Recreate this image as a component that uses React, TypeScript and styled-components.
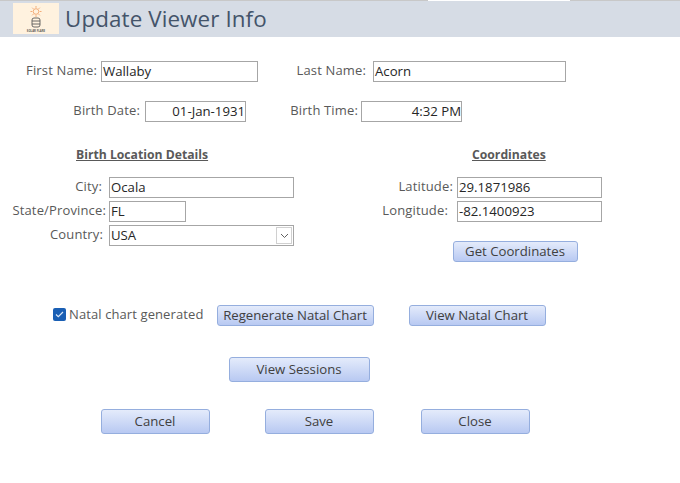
import styled, { createGlobalStyle } from "styled-components";

const GlobalStyle = createGlobalStyle`
  html, body {
    margin: 0;
    padding: 0;
    background: #ffffff;
    font-family: "Open Sans", "Noto Sans", sans-serif;
  }
`;

const Page = styled.div`
  width: 680px;
  height: 483px;
  overflow: hidden;
  background: #fff;
`;

const TopEdge = styled.div`
  display: flex;
  height: 1px;
  background: #c8c8c8;
`;

const TopGap = styled.div`
  width: 142px;
  margin-left: 428px;
  background: #fff;
`;

const Header = styled.header`
  display: flex;
  align-items: center;
  height: 36px;
  padding: 0 0 1px 13px;
  box-sizing: border-box;
  background: #d6dce5;
`;

const Logo = styled.svg`
  width: 46px;
  height: 31px;
  display: block;
`;

const Title = styled.h1`
  margin: 0 0 0 6px;
  font-size: 22.4px;
  font-weight: 400;
  line-height: 31px;
  letter-spacing: 0.1px;
  color: #44546a;
`;

const Body = styled.main`
  display: flex;
  flex-direction: column;
`;

const Row = styled.div<{ $top: number; $left?: number }>`
  display: flex;
  align-items: center;
  margin-top: ${(p) => p.$top}px;
  padding-left: ${(p) => p.$left ?? 0}px;
`;

const Label = styled.label<{ $w: number; $gap?: number }>`
  width: ${(p) => p.$w}px;
  margin-right: ${(p) => p.$gap ?? 4}px;
  margin-bottom: 4px;
  flex: none;
  display: flex;
  justify-content: flex-end;
  white-space: nowrap;
  font-size: 13px;
  line-height: 16px;
  letter-spacing: 0.15px;
  color: #595959;
`;

const Field = styled.div<{ $w: number; $right?: boolean; $ml?: number }>`
  position: relative;
  width: ${(p) => p.$w}px;
  height: 21px;
  margin-left: ${(p) => p.$ml ?? 0}px;
  flex: none;
  box-sizing: border-box;
  border: 1px solid #a6a6a6;
  padding: 0 ${(p) => (p.$right ? 0 : 1)}px 0 1px;
  text-align: ${(p) => (p.$right ? "right" : "left")};
  font-size: 13.2px;
  line-height: 18px;
  color: #262626;
  background: #fff;
  white-space: nowrap;
`;

const ComboArrow = styled.span`
  position: absolute;
  top: 1px;
  right: 1px;
  width: 16px;
  height: 17px;
  display: flex;
  align-items: center;
  justify-content: center;
  box-sizing: border-box;
  border: 1px solid #d0d0d0;
  background: #fff;
`;

const Columns = styled.div`
  display: flex;
  margin-top: 24px;
`;

const LocationColumn = styled.section`
  width: 381px;
  flex: none;
`;

const CoordinatesColumn = styled.section`
  flex: 1;
`;

const Heading = styled.h2<{ $left: number }>`
  margin: 0 0 14px ${(p) => p.$left}px;
  font-size: 12.2px;
  line-height: 17px;
  font-weight: 700;
  color: #595959;
  text-decoration: underline;
  white-space: nowrap;
`;

const FieldStack = styled.div`
  display: flex;
  flex-direction: column;
  gap: 3px;
`;

const StackRow = styled.div`
  display: flex;
  align-items: center;
  height: 21px;
`;

const Button = styled.button<{ $w: number; $h?: number; $ml?: number; $mt?: number }>`
  width: ${(p) => p.$w}px;
  height: ${(p) => p.$h ?? 21}px;
  margin-left: ${(p) => p.$ml ?? 0}px;
  margin-top: ${(p) => p.$mt ?? 0}px;
  flex: none;
  display: block;
  padding: 0 1px 2px 0;
  box-sizing: border-box;
  border: 1px solid #95aede;
  border-radius: 3px;
  background: linear-gradient(#e4ebfb, #b8c9f2);
  font-family: inherit;
  font-size: 13.2px;
  color: #404040;
  white-space: nowrap;
`;

const CheckBox = styled.span`
  width: 13px;
  height: 13px;
  margin-left: 53px;
  margin-bottom: 2px;
  flex: none;
  display: flex;
  align-items: center;
  justify-content: center;
  border-radius: 2px;
  background: #1a5fb4;
`;

const CheckLabel = styled.span`
  margin-left: 3px;
  width: 148px;
  margin-bottom: 4px;
  flex: none;
  font-size: 13px;
  line-height: 16px;
  letter-spacing: 0.1px;
  color: #595959;
  white-space: nowrap;
`;

export default function App() {
  return (
    <Page>
      <GlobalStyle />
      <TopEdge>
        <TopGap />
      </TopEdge>
      <Header>
        <Logo viewBox="0 0 46 31" aria-hidden="true">
          <rect width="46" height="31" fill="#fff2df" />
          <g stroke="#f0a46c" strokeWidth="0.9" fill="none">
            <circle cx="23" cy="8.5" r="2.8" />
            <path d="M23 3v1.8M23 12.2V14M17.5 8.5h1.8M26.7 8.5h1.8M19.2 4.7l1.2 1.2M25.6 11.1l1.2 1.2M26.8 4.7l-1.2 1.2M20.4 11.1l-1.2 1.2" />
          </g>
          <g stroke="#595959" strokeWidth="0.9" fill="#fff2df">
            <rect x="19" y="15" width="8" height="9" rx="2" />
            <path d="M19 18h8M19 21h8" />
          </g>
          <text x="23" y="29" textAnchor="middle" fontSize="2.8" fontWeight="700" fill="#595959">
            SOLAR FLARE
          </text>
        </Logo>
        <Title>Update Viewer Info</Title>
      </Header>
      <Body>
        <Row $top={24}>
          <Label $w={97}>First Name:</Label>
          <Field $w={157}>Wallaby</Field>
          <Label $w={108} $gap={7}>Last Name:</Label>
          <Field $w={193}>Acorn</Field>
        </Row>
        <Row $top={19}>
          <Label $w={140} $gap={5}>Birth Date:</Label>
          <Field $w={101} $right>01-Jan-1931</Field>
          <Label $w={112} $gap={3}>Birth Time:</Label>
          <Field $w={101} $right>4:32 PM</Field>
        </Row>
        <Columns>
          <LocationColumn>
            <Heading $left={76}>Birth Location Details</Heading>
            <FieldStack>
              <StackRow>
                <Label $w={102} $gap={7}>City:</Label>
                <Field $w={185}>Ocala</Field>
              </StackRow>
              <StackRow>
                <Label $w={106} $gap={3}>State/Province:</Label>
                <Field $w={77}>FL</Field>
              </StackRow>
              <StackRow>
                <Label $w={103} $gap={6}>Country:</Label>
                <Field $w={185}>
                  USA
                  <ComboArrow>
                    <svg width="9" height="6" viewBox="0 0 9 6" aria-hidden="true">
                      <path d="M1 1l3.5 3.5L8 1" fill="none" stroke="#606060" />
                    </svg>
                  </ComboArrow>
                </Field>
              </StackRow>
            </FieldStack>
          </LocationColumn>
          <CoordinatesColumn>
            <Heading $left={91}>Coordinates</Heading>
            <FieldStack>
              <StackRow>
                <Label $w={72} $gap={4}>Latitude:</Label>
                <Field $w={145}>29.1871986</Field>
              </StackRow>
              <StackRow>
                <Label $w={67} $gap={9}>Longitude:</Label>
                <Field $w={145}>-82.1400923</Field>
              </StackRow>
            </FieldStack>
            <Button $w={125} $ml={72} $mt={19}>Get Coordinates</Button>
          </CoordinatesColumn>
        </Columns>
        <Row $top={43}>
          <CheckBox>
            <svg width="9" height="7" viewBox="0 0 9 7" aria-hidden="true">
              <path d="M1 3.5l2.3 2.2L8 1" fill="none" stroke="#dbe8f8" strokeWidth="1.2" />
            </svg>
          </CheckBox>
          <CheckLabel>Natal chart generated</CheckLabel>
          <Button $w={157}>Regenerate Natal Chart</Button>
          <Button $w={137} $ml={35}>View Natal Chart</Button>
        </Row>
        <Row $top={31} $left={229}>
          <Button $w={141} $h={25}>View Sessions</Button>
        </Row>
        <Row $top={27} $left={101}>
          <Button $w={109} $h={25}>Cancel</Button>
          <Button $w={109} $h={25} $ml={55}>Save</Button>
          <Button $w={109} $h={25} $ml={47}>Close</Button>
        </Row>
      </Body>
    </Page>
  );
}
